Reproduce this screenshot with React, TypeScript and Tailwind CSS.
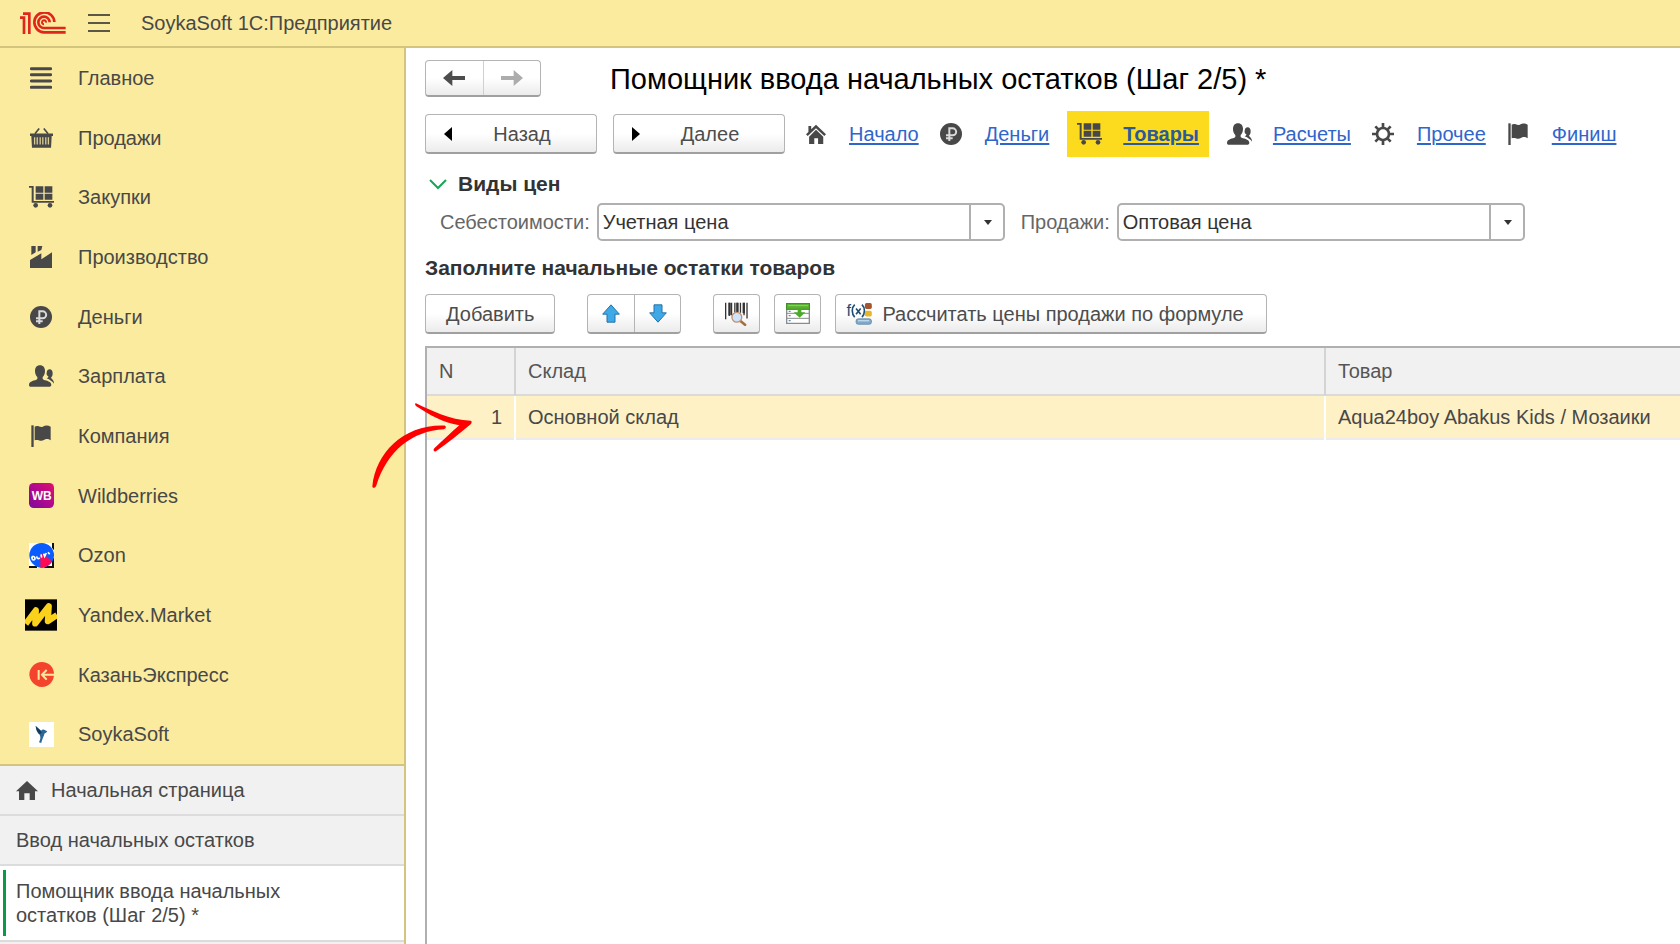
import type { ReactNode } from "react";
import clsx from "clsx";

type IconProps = { className?: string };

type SectionItem = {
  name: string;
  icon: ReactNode;
};

type StepItem = {
  name: string;
  icon: ReactNode;
  current?: boolean;
};

function Logo() {
  return (
    <svg viewBox="0 0 138 66" className="w-[46px] h-[22px]" fill="none" stroke="#e0261c" strokeWidth="8">
      <path d="M0 17H12V66" />
      <path d="M9 5H28V66" />
      <path d="M103 30A30 30 0 1 0 72 61H137" />
      <path d="M89 31A17 17 0 1 0 72 48H137" />
      <path d="M78 32A6 6 0 1 0 72 37" strokeWidth="6" />
    </svg>
  );
}

function ListIcon() {
  return (
    <svg viewBox="0 0 66 66" className="size-[22px]" stroke="currentColor" strokeWidth="9" strokeLinecap="round">
      <path d="M4 5H62M4 23H62M4 42H62M4 61H62" />
    </svg>
  );
}

function BasketIcon() {
  return (
    <svg viewBox="0 0 70 60" className="w-[23px] h-5" fill="none" stroke="currentColor">
      <path d="M15 17L28 1M55 17L42 1" strokeWidth="5" />
      <path d="M0 16H70V24H66L64 60H6L4 24H0z" fill="currentColor" stroke="none" />
      <path d="M14 28V50M22 28V50M31 28V50M39 28V50M48 28V50M56 28V50" stroke="#d9cc8e" strokeWidth="4" />
    </svg>
  );
}

function CartIcon() {
  return (
    <svg viewBox="0 0 75 66" className="w-[25px] h-[22px]" fill="currentColor">
      <path d="M0 0H14V45H75V50H8V5H0z" />
      <path d="M20 1H43V20H20zM47 1H70V20H47zM20 23H43V41H20zM47 23H70V41H47z" />
      <circle cx="20" cy="58" r="7" />
      <circle cx="63" cy="58" r="7" />
    </svg>
  );
}

function FactoryIcon() {
  return (
    <svg viewBox="0 0 66 66" className="size-[22px]" fill="currentColor">
      <path d="M0 66V42L34 22V40L66 19V66z" />
      <path d="M4 0H17V19L4 27zM23 0H37L34 12L23 17z" />
    </svg>
  );
}

function RubleIcon() {
  return (
    <svg viewBox="0 0 66 66" className="size-[22px]">
      <circle cx="33" cy="33" r="33" fill="currentColor" />
      <path d="M28 54V16H38A10 10 0 0 1 38 37H18M18 46H38" fill="none" stroke="#fff" strokeOpacity="0.8" strokeWidth="6" />
    </svg>
  );
}

function PeopleIcon() {
  return (
    <svg viewBox="0 0 75 64" className="w-[25px] h-[22px]" fill="currentColor">
      <path d="M33 0C43 0 48 7 48 17C48 26 45 31 41 35V41C48 47 66 46 67 58C67 62 64 64 60 64H6C2 64 0 62 0 58C1 46 18 47 25 41V35C21 31 18 26 18 17C18 7 23 0 33 0z" />
      <path d="M62 12C68 12 71 17 71 24C71 31 69 34 66 37C70 43 75 44 75 55C71 49 62 43 53 39C58 37 58 35 58 33C54 31 52 28 53 22C54 15 57 12 62 12z" />
    </svg>
  );
}

function FlagIcon() {
  return (
    <svg viewBox="0 0 58 66" className="w-5 h-[22px]" fill="currentColor">
      <path d="M0 1H7V66H0z" />
      <path d="M10 5C20 0 26 8 34 5C42 0 50 0 58 5V46C50 40 44 41 36 46C28 50 20 42 10 46z" />
    </svg>
  );
}

function HomeIcon({ className }: IconProps) {
  return (
    <svg viewBox="0 0 66 57" className={className} fill="currentColor">
      <path d="M33 0L66 31H57V57H41V37H25V57H9V31H0z" />
    </svg>
  );
}

function HouseIcon() {
  return (
    <svg viewBox="0 0 58 58" className="size-5" fill="currentColor">
      <path d="M7 6H15V15L29 2L58 30L53 35L29 12L5 35L0 30L7 23z" />
      <path d="M29 17L50 37V58H35V41H24V58H9V37z" />
    </svg>
  );
}

function GearIcon() {
  return (
    <svg viewBox="0 0 66 66" className="size-[22px]" fill="none" stroke="currentColor">
      <circle cx="33" cy="33" r="18" strokeWidth="8" />
      <path
        d="M33 0V13M33 53V66M0 33H13M53 33H66M10 10L19 19M47 47L56 56M56 10L47 19M19 47L10 56"
        strokeWidth="8"
      />
    </svg>
  );
}

function WildberriesIcon() {
  return (
    <svg viewBox="0 0 75 75" className="size-[25px]">
      <defs>
        <linearGradient id="wb" x1="0" y1="1" x2="1" y2="0">
          <stop offset="0" stopColor="#7d0a9c" />
          <stop offset="0.5" stopColor="#b0088f" />
          <stop offset="1" stopColor="#e0106e" />
        </linearGradient>
      </defs>
      <rect width="75" height="75" rx="14" fill="url(#wb)" />
      <text x="38" y="50" textAnchor="middle" fill="#fff" className="font-['Liberation_Sans',sans-serif] text-[36px] font-bold">
        WB
      </text>
    </svg>
  );
}

function OzonIcon() {
  return (
    <svg viewBox="0 0 75 75" className="size-[25px]">
      <path d="M0 0H75V75H0z" fill="#fff" />
      <path d="M75 0V22L69 14V0zM0 75V69H24V75zM75 75H46V69H69V46H75z" fill="#111" />
      <circle cx="38" cy="37" r="37" fill="#0a5cff" />
      <path d="M34 75L34 36L44 33L68 55C60 68 48 75 34 75z" fill="#ff0a55" />
      <path
        d="M9 44C8 53 19 53 18 45C16 39 9 39 9 44M23 40C24 48 29 48 32 44M36 34L38 44M44 32L47 40L52 30M57 28L62 34"
        fill="none"
        stroke="#fff"
        strokeWidth="5"
      />
    </svg>
  );
}

function YandexMarketIcon() {
  return (
    <svg viewBox="0 0 94 92" className="size-8">
      <path d="M0 0H94V92H0z" fill="#000" />
      <path
        d="M2 72L32 32L30 71L70 20L67 64L94 46"
        fill="none"
        stroke="#fbd21b"
        strokeWidth="18"
        strokeLinejoin="round"
      />
    </svg>
  );
}

function KazanExpressIcon() {
  return (
    <svg viewBox="0 0 75 75" className="size-[25px]">
      <path d="M38 0C60 0 75 16 75 37S60 75 38 75C18 75 1 56 1 37S18 0 38 0z" fill="#f4442e" />
      <path d="M29 24V53M75 38H38M53 24L39 38L53 53" fill="none" stroke="#fdeaa0" strokeWidth="6" />
    </svg>
  );
}

function SoykaIcon() {
  return (
    <svg viewBox="0 0 75 75" className="size-[25px]">
      <path d="M0 0H75V75H0z" fill="#fff" />
      <path d="M20 12L36 26C42 19 48 23 55 29L46 35C45 43 40 48 37 63L30 61C34 52 36 46 32 38C25 33 21 24 20 12z" fill="#2a6796" />
      <path d="M20 12L34 25L38 33L31 36C25 30 21 22 20 12z" fill="#153a5c" />
    </svg>
  );
}

function BarcodeIcon() {
  return (
    <svg viewBox="0 0 70 72" className="w-[23px] h-6">
      <path d="M2 2V52M13 2V42M20 2V40M30 2V32M37 2V32M47 2V32M58 2V40M67 2V50" stroke="#333" strokeWidth="4" />
      <path d="M14 2V40M38 2V30M57 2V34" stroke="#333" strokeWidth="7" />
      <path d="M47 57L61 69" stroke="#a8703c" strokeWidth="8" strokeLinecap="round" />
      <circle cx="36" cy="46" r="15" fill="#cfe3fa" stroke="#c09070" strokeWidth="4" />
    </svg>
  );
}

function FillTableIcon() {
  return (
    <svg viewBox="0 0 72 63" className="w-6 h-[21px]">
      <path d="M2 2H70V61H2z" fill="#fff" stroke="#8c8c8c" strokeWidth="4" />
      <path d="M2 31H70M2 46H70" stroke="#8c8c8c" strokeWidth="3" />
      <path d="M8 38H14M8 53H14M8 25H14" stroke="#5a8fb5" strokeWidth="4" />
      <path d="M1 1H71V19H1z" fill="#58b030" stroke="#3c8a20" strokeWidth="3" />
      <path d="M6 8H66" stroke="#8ed36c" strokeWidth="3" />
      <path d="M35 16H46V28H58L41 44L23 28H35z" fill="#4ea82c" />
    </svg>
  );
}

function FormulaIcon() {
  return (
    <svg viewBox="0 0 78 70" className="w-[26px] h-[23px] overflow-visible">
      <rect x="57" y="3" width="21" height="18" rx="5" fill="#a4562c" />
      <rect x="57" y="27" width="21" height="17" rx="5" fill="#e9b62a" />
      <rect x="30" y="51" width="47" height="17" rx="7" fill="#7fa9c9" stroke="#4f7d9e" strokeWidth="2" />
      <path d="M36 57H70" stroke="#c3dcec" strokeWidth="4" />
      <text x="1" y="42" fill="#1f4e74" className="font-['Liberation_Sans',sans-serif] text-[50px]">
        f
      </text>
      <path d="M26 8C16 17 16 36 26 46M48 8C58 17 58 36 48 46" fill="none" stroke="#1f4e74" strokeWidth="5" />
      <path d="M30 20L44 37M44 20L30 37" stroke="#1f4e74" strokeWidth="5" />
    </svg>
  );
}

function BlueArrow({ className }: IconProps) {
  return (
    <svg viewBox="0 0 54 56" className={clsx("w-[18px] h-[19px]", className)}>
      <path d="M27 2L52 30H39V54H15V30H2z" fill="#3fa9e8" stroke="#2373a8" strokeWidth="3" strokeLinejoin="round" />
    </svg>
  );
}

function HistoryArrow({ className }: IconProps) {
  return (
    <svg viewBox="0 0 66 48" className={clsx("w-[22px] h-4", className)} fill="currentColor">
      <path d="M0 24L28 0V18H66V30H28V48z" />
    </svg>
  );
}

const sections: SectionItem[] = [
  { name: "Главное", icon: <ListIcon /> },
  { name: "Продажи", icon: <BasketIcon /> },
  { name: "Закупки", icon: <CartIcon /> },
  { name: "Производство", icon: <FactoryIcon /> },
  { name: "Деньги", icon: <RubleIcon /> },
  { name: "Зарплата", icon: <PeopleIcon /> },
  { name: "Компания", icon: <FlagIcon /> },
  { name: "Wildberries", icon: <WildberriesIcon /> },
  { name: "Ozon", icon: <OzonIcon /> },
  { name: "Yandex.Market", icon: <YandexMarketIcon /> },
  { name: "КазаньЭкспресс", icon: <KazanExpressIcon /> },
  { name: "SoykaSoft", icon: <SoykaIcon /> },
];

const steps: StepItem[] = [
  { name: "Начало", icon: <HouseIcon /> },
  { name: "Деньги", icon: <RubleIcon /> },
  { name: "Товары", icon: <CartIcon />, current: true },
  { name: "Расчеты", icon: <PeopleIcon /> },
  { name: "Прочее", icon: <GearIcon /> },
  { name: "Финиш", icon: <FlagIcon /> },
];

const rows = [{ n: 1, store: "Основной склад", product: "Aqua24boy Abakus Kids / Мозаики" }];

const buttonStyle =
  "flex items-center rounded-[4px] border border-b-2 border-[#b4b4b4] border-b-[#a0a0a0] bg-linear-to-b from-white from-50% to-[#ebebeb] text-[#4d4d4d]";

function Sidebar() {
  return (
    <aside className="flex flex-col w-[406px] shrink-0 border-r-2 border-[#d3c57d] bg-[#fbeb9e]">
      <nav className="flex flex-col flex-1">
        {sections.map((s) => (
          <a key={s.name} href="#" className="flex flex-1 items-center gap-[21px] pl-[25px]">
            <span className="flex w-8 justify-center">{s.icon}</span>
            {s.name}
          </a>
        ))}
      </nav>
      <div className="flex flex-col border-t-2 border-[#d3c57d] bg-[#f1f1f1] leading-6">
        <a href="#" className="flex items-center gap-[13px] h-[50px] pl-4 border-b-2 border-[#dcdcdc]">
          <HomeIcon className="w-[22px] h-[19px]" />
          Начальная страница
        </a>
        <a href="#" className="flex items-center h-[50px] pl-4 border-b-2 border-[#dcdcdc]">
          Ввод начальных остатков
        </a>
        <div className="flex bg-white py-1 pl-[3px] border-b-2 border-[#dcdcdc]">
          <span className="w-[3px] bg-[#0a9a4a]" />
          <a href="#" className="w-[320px] py-[9px] pl-[10px]">
            Помощник ввода начальных остатков (Шаг 2/5) *
          </a>
        </div>
        <div className="h-[2px]" />
      </div>
    </aside>
  );
}

type PriceSelectProps = { id: string; label: string; value: string };

function PriceSelect({ id, label, value }: PriceSelectProps) {
  return (
    <div className="flex items-center gap-[7px]">
      <label htmlFor={id} className="text-[#666]">
        {label}
      </label>
      <div className="relative flex">
        <select
          id={id}
          defaultValue={value}
          className="appearance-none w-[408px] h-[38px] pl-1 pr-9 rounded-[5px] border-2 border-[#b0b0b0] bg-white text-[#333]"
        >
          <option>{value}</option>
        </select>
        <span className="absolute inset-y-0 right-0 flex w-9 items-center justify-center border-l-2 border-[#b0b0b0] pointer-events-none">
          <svg viewBox="0 0 8 5" className="w-2 h-[5px]">
            <path d="M0 0H8L4 5z" fill="#333" />
          </svg>
        </span>
      </div>
    </div>
  );
}

function Steps() {
  return (
    <nav className="flex items-center h-[46px] ml-2">
      {steps.map((s) => (
        <a
          key={s.name}
          href="#"
          className={clsx("flex h-full items-center gap-[21px] px-[10px]", s.current && "mx-2 bg-[#fcdb1f] font-bold")}
        >
          <span className="flex w-[25px] justify-center">{s.icon}</span>
          <span className={clsx("underline underline-offset-2 decoration-2", s.current ? "text-[#2a5a9c]" : "text-[#2f66cc]")}>
            {s.name}
          </span>
        </a>
      ))}
    </nav>
  );
}

function Toolbar() {
  return (
    <div className="flex h-10 mt-[14px]">
      <button className={clsx(buttonStyle, "px-5")}>Добавить</button>
      <div className={clsx(buttonStyle, "ml-8 w-[94px]")}>
        <button aria-label="Вверх" className="flex flex-1 h-full items-center justify-center border-r border-[#b4b4b4]">
          <BlueArrow />
        </button>
        <button aria-label="Вниз" className="flex flex-1 h-full items-center justify-center">
          <BlueArrow className="rotate-180" />
        </button>
      </div>
      <button aria-label="Штрихкод" className={clsx(buttonStyle, "ml-8 w-[47px] justify-center")}>
        <BarcodeIcon />
      </button>
      <button aria-label="Заполнить" className={clsx(buttonStyle, "ml-[14px] w-[47px] justify-center")}>
        <FillTableIcon />
      </button>
      <button className={clsx(buttonStyle, "ml-[14px] gap-[10px] pl-[10px] pr-[22px]")}>
        <FormulaIcon />
        Рассчитать цены продажи по формуле
      </button>
    </div>
  );
}

function ProductTable() {
  return (
    <div className="flex-1 mt-3 border-l-2 border-t-2 border-[#b0b0b0]">
      <table className="w-full table-fixed border-collapse text-left">
        <thead>
          <tr className="h-[47px] bg-[#f1f1f1] text-[#555] border-b-2 border-[#dadada]">
            <th className="w-[88px] pl-3 font-normal border-r-2 border-[#d4d4d4]">N</th>
            <th className="w-[810px] pl-3 font-normal border-r-2 border-[#d4d4d4]">Склад</th>
            <th className="pl-3 font-normal">Товар</th>
          </tr>
        </thead>
        <tbody>
          {rows.map((r) => (
            <tr key={r.n} className="h-11 bg-[#fef1c5] border-b-2 border-[#ececec]">
              <td className="pr-3 text-right border-r-2 border-white">{r.n}</td>
              <td className="pl-3 border-r-2 border-white">{r.store}</td>
              <td className="pl-3 whitespace-nowrap">{r.product}</td>
            </tr>
          ))}
        </tbody>
      </table>
    </div>
  );
}

// hand-drawn pointer to the first row
function Pointer() {
  return (
    <svg viewBox="0 0 300 260" className="absolute left-[372px] top-[402px] w-[100px] h-[87px] pointer-events-none" fill="#f00">
      <path d="M1 252C12 150 95 66 218 70C224 73 222 79 216 81C120 86 45 146 13 250C10 258 2 260 1 252z" />
      <path d="M132 3C180 26 232 52 296 56C301 58 299 63 296 66C264 92 228 122 192 147C186 150 182 144 187 138C214 112 238 90 262 69C214 62 172 38 134 13C128 8 128 2 132 3z" />
    </svg>
  );
}

export default function App() {
  return (
    <div className="relative flex flex-col min-h-screen overflow-hidden bg-white font-['Liberation_Sans',Arial,sans-serif] text-[20px] leading-6 text-[#484848]">
      <header className="flex items-center h-12 pl-5 border-b-2 border-[#d3c57d] bg-[#fbeb9e]">
        <Logo />
        <button aria-label="Меню" className="ml-[22px]">
          <svg viewBox="0 0 22 18" className="w-[22px] h-[18px]" stroke="#5c5744" strokeWidth="2">
            <path d="M0 1H22M0 9H22M0 17H22" />
          </svg>
        </button>
        <span className="ml-[31px]">SoykaSoft 1С:Предприятие</span>
      </header>
      <div className="flex flex-1">
        <Sidebar />
        <main className="flex flex-col flex-1 min-w-0 pl-[19px] pt-3">
          <div className="flex items-center">
            <div className={clsx(buttonStyle, "w-[116px] h-[37px]")}>
              <button aria-label="Назад" className="flex flex-1 h-full items-center justify-center border-r border-[#d0d0d0]">
                <HistoryArrow />
              </button>
              <button aria-label="Вперед" className="flex flex-1 h-full items-center justify-center text-[#acacac]">
                <HistoryArrow className="rotate-180" />
              </button>
            </div>
            <h1 className="ml-[69px] text-[29px] leading-9 text-black">Помощник ввода начальных остатков (Шаг 2/5) *</h1>
          </div>
          <div className="flex items-center mt-[14px]">
            <button className={clsx(buttonStyle, "w-[172px] h-10 pl-[18px] pr-1")}>
              <svg viewBox="0 0 8 14" className="w-2 h-[14px]">
                <path d="M8 0V14L0 7z" fill="#000" />
              </svg>
              <span className="flex-1 text-center">Назад</span>
            </button>
            <button className={clsx(buttonStyle, "ml-4 w-[172px] h-10 pl-[18px] pr-1")}>
              <svg viewBox="0 0 8 14" className="w-2 h-[14px]">
                <path d="M0 0V14L8 7z" fill="#000" />
              </svg>
              <span className="flex-1 text-center">Далее</span>
            </button>
            <Steps />
          </div>
          <h2 className="flex items-center mt-[15px] pl-1 gap-[11px] text-[21px] leading-6 font-bold text-[#333]">
            <svg viewBox="0 0 18 11" className="w-[18px] h-[11px]" fill="none" stroke="#18a558" strokeWidth="2">
              <path d="M1 1L9 9L17 1" />
            </svg>
            Виды цен
          </h2>
          <div className="flex mt-[7px] ml-[15px] gap-4">
            <PriceSelect id="cost" label="Себестоимости:" value="Учетная цена" />
            <PriceSelect id="sale" label="Продажи:" value="Оптовая цена" />
          </div>
          <h2 className="mt-[15px] text-[21px] leading-6 font-bold text-[#333]">Заполните начальные остатки товаров</h2>
          <Toolbar />
          <ProductTable />
        </main>
      </div>
      <Pointer />
    </div>
  );
}
